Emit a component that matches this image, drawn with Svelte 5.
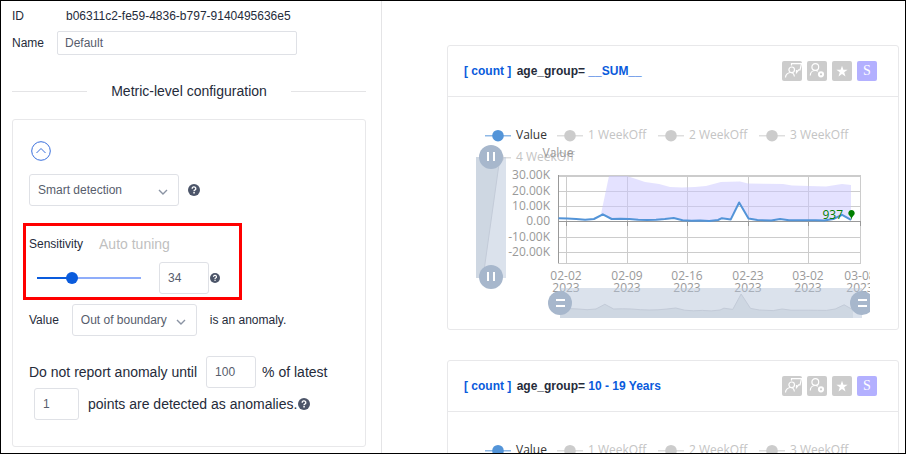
<script>
  let sensitivity = $state(34);

  const cards = [
    { id: 'sum', group: '__SUM__' },
    { id: 'teens', group: '10 - 19 Years' },
  ];

  const legend = [
    { x: 498, y: 135, label: 'Value', active: true },
    { x: 570, y: 135, label: '1 WeekOff' },
    { x: 671, y: 135, label: '2 WeekOff' },
    { x: 772, y: 135, label: '3 WeekOff' },
    { x: 498, y: 157, label: '4 WeekOff' },
  ];

  const yTicks = [
    [175, '30.00K'],
    [191, '20.00K'],
    [206, '10.00K'],
    [221, '0.00'],
    [237, '-10.00K'],
    [252, '-20.00K'],
  ];

  const xTicks = [
    [566, '02-02'],
    [627, '02-09'],
    [687, '02-16'],
    [748, '02-23'],
    [808, '03-02'],
    [860, '03-08'],
  ];

  const levels = [218.2, 218.6, 219, 219.7, 219, 214.3, 219, 218.8, 219, 219.7, 220, 219.8, 219, 218, 220.2, 220.8, 220.4, 220.9, 220, 218.2, 219.4, 202.5, 218.4, 220, 220.6, 219, 220.2, 220.2, 220.2, 220.3, 220.4, 219, 214.8, 219.8];
  const step = (851 - 558.5) / (levels.length - 1);
  // The spike on 02-22 falls between two regular steps.
  const xAt = (i) => (i > 18 && i < 24 ? 558.5 + i * step - (i === 21 ? 5.5 : 5) : 558.5 + i * step);
  const points = levels.map((y, i) => [xAt(i), y]);
  const line = points.map((p) => p.join(',')).join(' ');
  const lowerBand = points.slice(5).reverse().map((p) => p.join(',')).join(' ');
  const overview = points
    .map(([x, y]) => `${x + 2},${311 - (221 - y) + (y < 210 ? 1.5 : 0)}`)
    .join(' ');
</script>

{#snippet help(size)}
  <svg class="help" width={size} height={size} viewBox="0 0 12 12" role="img" aria-label="Help">
    <circle cx="6" cy="6" r="6" fill="#4c5569" />
    <path d="M4.2 4.7a1.8 1.7 0 1 1 2.6 1.4q-.8.4-.8 1.1" fill="none" stroke="#fff" stroke-width="1.4" />
    <rect x="5.3" y="8" width="1.5" height="1.5" fill="#fff" />
  </svg>
{/snippet}

{#snippet chevron()}
  <svg class="chevron" width="10" height="6" viewBox="0 0 10 6" aria-hidden="true">
    <path d="M1 1l4 4 4-4" fill="none" stroke="#8a93a3" stroke-width="1.4" />
  </svg>
{/snippet}

{#snippet knob(x, y, upright)}
  <circle cx={x} cy={y} r="12" fill="#a7b7cc" />
  {#if upright}
    <path d="M{x - 3} {y - 5}v9M{x + 3} {y - 5}v9" stroke="#fff" stroke-width="2" />
  {:else}
    <path d="M{x - 4} {y - 3}h9M{x - 4} {y + 3}h9" stroke="#fff" stroke-width="2" />
  {/if}
{/snippet}

<div class="page">
  <aside>
    <div class="field">
      <span class="caption">ID</span>
      <span class="ident">b06311c2-fe59-4836-b797-9140495636e5</span>
    </div>
    <div class="field">
      <label class="caption" for="name">Name</label>
      <input id="name" class="name" type="text" value="Default" />
    </div>

    <h2>Metric-level configuration</h2>

    <section class="config">
      <button class="collapse" aria-label="Collapse">
        <svg width="20" height="20" viewBox="0 0 20 20">
          <circle cx="10" cy="10" r="9.3" fill="none" stroke="#3a6fdc" />
          <path d="M5.5 12L10 7.5 14.5 12" fill="none" stroke="#3a6fdc" />
        </svg>
      </button>

      <div class="row method">
        <div class="select wide">
          <select aria-label="Detection method"><option>Smart detection</option></select>
          {@render chevron()}
        </div>
        {@render help(12)}
      </div>

      <div class="highlight">
        <div class="row tuning">
          <label for="sensitivity">Sensitivity</label>
          <button class="auto">Auto tuning</button>
        </div>
        <div class="row hinted">
          <input
            id="sensitivity"
            class="slider"
            type="range"
            min="0"
            max="100"
            bind:value={sensitivity}
            style="--fill: {sensitivity}%"
          />
          <input class="box" type="text" aria-label="Sensitivity value" bind:value={sensitivity} />
          {@render help(10)}
        </div>
      </div>

      <div class="row value">
        <label for="direction">Value</label>
        <div class="select">
          <select id="direction"><option>Out of boundary</option></select>
          {@render chevron()}
        </div>
        <span>is an anomaly.</span>
      </div>

      <div class="row sentence">
        <label for="ratio">Do not report anomaly until</label>
        <input id="ratio" class="box ratio" type="text" value="100" />
        <span>% of latest</span>
      </div>
      <div class="row sentence hinted">
        <input id="count" class="box count" type="text" value="1" />
        <label for="count">points are detected as anomalies.</label>
        {@render help(12)}
      </div>
    </section>
  </aside>

  <main>
    {#each cards as card (card.id)}
      <article>
        <header>
          <h3><a class="metric" href="#{card.id}">[ count ]</a> age_group= <a href="#{card.id}">{card.group}</a></h3>
          <div class="actions">
            <button aria-label="Feedback">
              <svg width="20" height="20" viewBox="0 0 20 20" fill="none" stroke="#fff" stroke-width="1.2">
                <circle cx="9.7" cy="8.8" r="2.8" />
                <path d="M3.5 16.5c0-3 2.6-5 5.2-5 1.8 0 3.3 1.2 3.7 4M9.5 4.5V2.7h10L18 8.9h-1.3l-2.2 2.6V8.9" />
              </svg>
            </button>
            <button aria-label="User settings">
              <svg width="20" height="20" viewBox="0 0 20 20" fill="none" stroke="#fff" stroke-width="1.2">
                <circle cx="8.3" cy="6" r="3.4" />
                <path d="M3.3 14.5c0-2.9 2.2-5 5-5 1 0 1.9.2 2.6.7" />
                <circle cx="14" cy="13.3" r="2.1" stroke-width="2" />
              </svg>
            </button>
            <button aria-label="Favorite">
              <svg width="20" height="20" viewBox="0 0 20 20">
                <path d="M10 4.8l1.4 4h4.2l-3.4 2.5 1.3 4.1-3.5-2.5-3.5 2.5 1.3-4.1-3.4-2.5h4.2z" fill="#fff" />
              </svg>
            </button>
            <button class="letter">S</button>
          </div>
        </header>

        <div class="chart">
          <svg viewBox="448 97 422 232" role="img" aria-label="Metric chart">
            {#each legend as item}
              <g fill={item.active ? '#5394d8' : '#ccc'}>
                <rect x={item.x - 13} y={item.y} width="26" height="1.5" opacity="0.65" />
                <circle cx={item.x} cy={item.y + 0.7} r="5.8" />
                <text x={item.x + 18} y={item.y + 4} fill={item.active ? '#333' : '#c4c4c4'}>{item.label}</text>
              </g>
            {/each}
            <text x="558" y="157" text-anchor="middle" fill="#999">Value</text>

            <g stroke="#ccc">
              {#each yTicks as [y]}
                <path d="M558 {y + 0.5}H861" />
              {/each}
              <path d="M558 176.5H861M558 263.5H861" />
              {#each xTicks as [x]}
                <path d="M{x + 0.5} 176V263" />
              {/each}
            </g>
            <path d="M558.5 175V263M558 221.5H861" stroke="#999" fill="none" />
            {#each xTicks as [x]}
              <path d="M{x + 0.5} 221v5" stroke="#999" />
            {/each}

            <g fill="#999">
              {#each yTicks as [y, label]}
                <text x="550" y={y + 4} text-anchor="end">{label}</text>
              {/each}
              {#each xTicks as [x, label]}
                <text x={x} y="280" text-anchor="middle">{label}</text>
                <text x={x} y="292" text-anchor="middle">2023</text>
              {/each}
            </g>

            <polygon
              points="601,214 609,176 627,176 645,182 659,184 670,187 682,187.5 695,187 706,186 721,182 740,181.5 748,183.5 783,184 792,185.5 826,186.5 842,184 851,185 {lowerBand}"
              fill="#c9c6ff"
              fill-opacity="0.5"
            />
            <polyline points={line} fill="none" stroke="#5394d8" stroke-width="2" stroke-linejoin="round" />
            <text x="843" y="219" text-anchor="end" fill="#008000">937</text>
            <path d="M851.5 220q-.2-3-1.9-4.3a3.2 3.2 0 1 1 3.8 0q-1.7 1.3-1.9 4.3z" fill="#008000" />

            <rect x="476" y="157" width="30" height="121" fill="#b8c6da" fill-opacity="0.5" />
            <path d="M476 157H500L483 278H476z" fill="#9fb0c0" fill-opacity="0.22" />
            <path d="M500 157L483 278" stroke="#c3cbd8" />
            {@render knob(491, 157, true)}
            {@render knob(491, 277, true)}

            <rect x="560" y="288" width="302" height="30" fill="#b8c6da" fill-opacity="0.5" />
            <polygon points="560,318 {overview} 853,318" fill="#9fb0c0" fill-opacity="0.22" />
            <polyline points={overview} fill="none" stroke="#c3cbd8" />
            {@render knob(560, 303, false)}
            {@render knob(862, 303, false)}
          </svg>
        </div>
      </article>
    {/each}
  </main>
</div>

<style>
  .page {
    display: flex;
    box-sizing: border-box;
    height: 100vh;
    overflow: hidden;
    border: 1px solid #000;
    background: #fff;
    color: #252b3a;
    font: 12px/16px "Liberation Sans", Arial, sans-serif;
  }

  input,
  select,
  button {
    box-sizing: border-box;
    margin: 0;
    font: inherit;
  }

  button {
    padding: 0;
    border: 0;
    background: none;
    cursor: pointer;
  }

  aside {
    box-sizing: border-box;
    flex: 0 0 381px;
    padding: 6px 15px 0 11px;
    border-right: 1px solid #e4e4e6;
  }

  .field {
    display: flex;
    align-items: center;
    height: 24px;
  }

  .field:first-child {
    height: 18px;
    margin-bottom: 6px;
  }

  .caption {
    width: 45px;
  }

  .ident {
    margin-left: 9px;
  }

  .name {
    width: 240px;
    height: 24px;
    padding: 0 7px;
    border: 1px solid #dfe1e6;
    border-radius: 2px;
    color: #575d6c;
  }

  h2 {
    display: flex;
    align-items: center;
    gap: 24px;
    margin: 26px 0 18px;
    font-size: 14px;
    font-weight: 400;
    line-height: 20px;
    white-space: nowrap;
  }

  h2::before,
  h2::after {
    content: "";
    flex: 1;
    height: 1px;
    background: #e4e4e6;
  }

  .config {
    padding: 21px 16px 26px;
    border: 1px solid #e8e8ea;
    border-radius: 3px;
  }

  .collapse {
    display: block;
    width: 20px;
    height: 20px;
    margin: 0 2px 13px;
  }

  .collapse svg,
  .help,
  .actions svg {
    display: block;
    flex: none;
  }

  .row {
    display: flex;
    align-items: center;
    height: 32px;
    white-space: nowrap;
  }

  .method {
    gap: 9px;
    margin-bottom: 17px;
  }

  .hinted .help {
    margin-left: 1px;
  }

  .select {
    position: relative;
    width: 125px;
    height: 32px;
  }

  .select.wide {
    width: 150px;
  }

  .select select {
    width: 100%;
    height: 100%;
    padding: 0 8px;
    border: 1px solid #dfe1e6;
    border-radius: 3px;
    appearance: none;
    background: #fff;
    color: #575d6c;
  }

  .chevron {
    position: absolute;
    right: 11px;
    top: 15px;
    pointer-events: none;
  }

  .highlight {
    width: 207px;
    margin: 0 -6px 4px;
    padding: 0 3px 3px;
    border: 3px solid #f00;
  }

  .tuning {
    height: 36px;
    gap: 16px;
  }

  .auto {
    color: #bfbfbf;
    font-size: 14px;
  }

  .slider {
    width: 116px;
    height: 12px;
    margin: 0 12px 0 2px;
    appearance: none;
    background: linear-gradient(to right, #0a5bdc var(--fill), #8fadfa var(--fill)) center / 104px 2px no-repeat;
  }

  .slider::-webkit-slider-thumb {
    width: 12px;
    height: 12px;
    appearance: none;
    border-radius: 50%;
    background: #0a5bdc;
  }

  .box {
    width: 50px;
    height: 32px;
    padding: 0 8px;
    border: 1px solid #dfe1e6;
    border-radius: 3px;
    color: #575d6c;
    font-size: 12px;
  }

  .value {
    gap: 13px;
    margin-bottom: 20px;
  }

  .sentence {
    font-size: 14px;
  }

  .ratio {
    margin: 0 6px 0 9px;
  }

  .count {
    width: 45px;
    margin: 0 9px 0 5px;
  }

  main {
    flex: 1;
    display: flex;
    flex-direction: column;
    gap: 30px;
    padding: 44px 6px 0 65px;
  }

  article {
    flex: none;
    border: 1px solid #e8e8ea;
    border-radius: 3px;
  }

  header {
    display: flex;
    align-items: center;
    justify-content: space-between;
    height: 50px;
    padding: 0 21px 0 16px;
    border-bottom: 1px solid #e8e8ea;
  }

  h3 {
    margin: 0;
    font-size: 12px;
    line-height: 16px;
  }

  h3 a {
    color: #0a5bdc;
    text-decoration: none;
  }

  .metric {
    margin-right: 2px;
  }

  .actions {
    display: flex;
    gap: 5px;
  }

  .actions button {
    width: 20px;
    height: 20px;
    border-radius: 2px;
    background: #ccc;
  }

  .actions .letter {
    background: #b3b0ff;
    color: #fff;
    font: 14px/20px "Liberation Serif", serif;
  }

  .chart {
    padding-right: 28px;
  }

  .chart svg {
    display: block;
    width: 100%;
    height: auto;
    font: 12px "Open Sans", "Noto Sans", sans-serif;
  }
</style>
